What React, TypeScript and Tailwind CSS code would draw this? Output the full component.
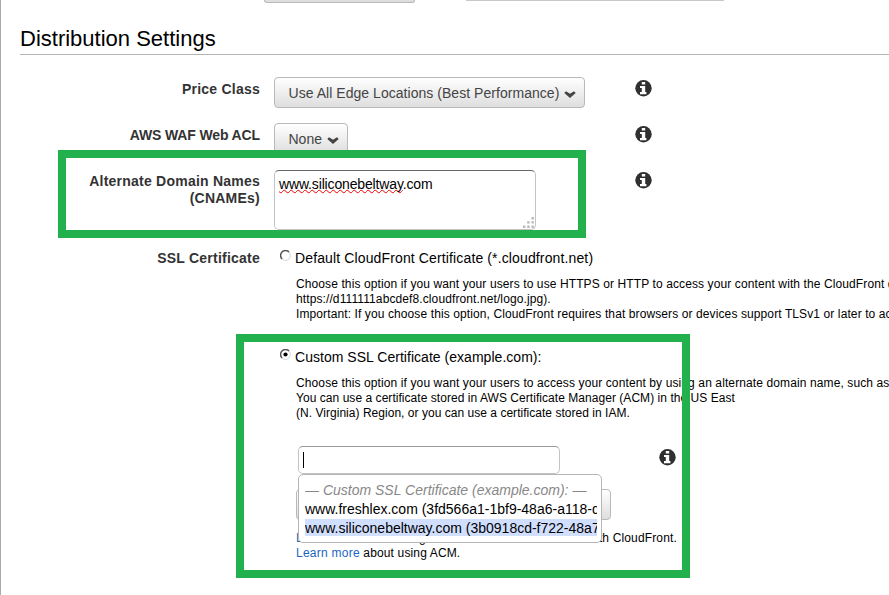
import type { ReactNode } from "react";

function InfoIcon({ className = "" }: { className?: string }) {
  return (
    <svg className={`h-[17px] w-[17px] shrink-0 ${className}`} viewBox="0 0 17 17">
      <circle cx="8.5" cy="8.2" r="8.2" fill="#303030" />
      <path d="M6.8 1.9h3.4v2.6H6.8zM5 6h5.2v6H11.4v2.2H5V12h1.8V8H5z" fill="#fff" />
    </svg>
  );
}

function Chevron() {
  return (
    <svg className="relative top-px h-[7px] w-[12px] shrink-0" viewBox="0 0 12 7">
      <path d="M.3 1.9 2 .2 6 2.7 10 .2 11.7 1.9 6 6.9Z" fill="#444" />
    </svg>
  );
}

function SelectButton({ className, children }: { className: string; children: ReactNode }) {
  return (
    <div
      className={`flex h-[31px] shrink-0 items-center rounded-[4px] border border-[#b9b9b9] bg-linear-to-b from-white to-[#dedede] pt-px pl-[13.5px] text-[14px] text-[#444] ${className}`}
    >
      {children}
    </div>
  );
}

function Row({ label, className, children }: { label: ReactNode; className: string; children: ReactNode }) {
  return (
    <div className={`flex items-start ${className}`}>
      <div className="mr-[13px] w-[240px] shrink-0 pt-[4px] text-right text-[14px] leading-[17px] font-bold tracking-[0.23px] whitespace-nowrap text-[#333]">
        {label}
      </div>
      {children}
    </div>
  );
}

function Radio({ checked = false }: { checked?: boolean }) {
  return (
    <svg className="mr-[3px] h-[12px] w-[12px] shrink-0" viewBox="0 0 12 12">
      <circle cx="5.5" cy="5.5" r="4.9" fill="#fff" stroke="#d4d4d4" />
      <path d="M2 9A4.9 4.9 0 0 1 9 2" fill="none" stroke="#555" strokeWidth="1.5" />
      {checked && <circle cx="5.5" cy="5.5" r="2.1" fill="#000" />}
    </svg>
  );
}

export default function App() {
  return (
    <main className="relative flex h-[595px] w-[889px] flex-col overflow-hidden border-l border-[#aaa] bg-white pl-[19px] font-['Liberation_Sans',Arial,sans-serif] text-black">
      <div className="flex h-[3px] shrink-0 items-end pl-[244px]">
        <div className="h-[3px] w-[151px] rounded-b-[4px] border border-t-0 border-[#b9b9b9] bg-[#dedede]" />
        <div className="mb-[2px] ml-[51px] h-px w-[258px] bg-[#c8c8c8]" />
      </div>
      <h1 className="h-[52px] shrink-0 border-b border-[#b5b5b5] pt-[23px] text-[22px] leading-[25px]">
        <span>Distribution Settings</span>
      </h1>

      <Row label="Price Class" className="mt-[22px] h-[46px]">
        <SelectButton className="ml-px w-[311px]">
          <span className="w-[271px] overflow-hidden whitespace-nowrap tracking-[0.04px]">Use All Edge Locations (Best Performance)</span>
          <span className="ml-[4px] flex"><Chevron /></span>
        </SelectButton>
        <InfoIcon className="mt-[3px] ml-[50px]" />
      </Row>
      <Row label={<span className="tracking-[-0.13px]">AWS WAF Web ACL</span>} className="h-[47px]">
        <SelectButton className="ml-px w-[74px]">
          <span className="mr-[4px] w-[34px]">None</span>
          <Chevron />
        </SelectButton>
        <InfoIcon className="mt-[3px] ml-[287px]" />
      </Row>
      <Row label={<span className="relative -top-px block">Alternate Domain Names<br />(CNAMEs)</span>} className="h-[80px]">
        <div className="ml-px flex h-[60px] w-[262px] shrink-0 items-start justify-between rounded-[5px] border border-[#c4c4c4] border-t-[#666] pl-[4px] text-[14px] tracking-[-0.15px]">
          <span className="mt-[5px] leading-[17px]">
            <span className="underline decoration-[#f00000] decoration-wavy decoration-[1px] underline-offset-[0px] [text-decoration-skip-ink:none]">www.siliconebeltway</span>.com
          </span>
          <svg className="mt-[45px] h-[13px] w-[13px]" viewBox="0 0 13 13" fill="#b8b8b8">
            <path d="M9.5 1h2.4v2.4H9.5zM5.2 5.2h2.4v2.4H5.2zM9.5 5.2h2.4v2.4H9.5zM1 9.5h2.4v2.4H1zM5.2 9.5h2.4v2.4H5.2zM9.5 9.5h2.4v2.4H9.5z" />
          </svg>
        </div>
        <InfoIcon className="mt-[2px] ml-[99px]" />
      </Row>

      <Row label={<span className="relative -top-[4px] block">SSL Certificate</span>} className="">
        <div className="flex w-[640px] shrink-0 flex-col pl-[7px] whitespace-nowrap">
          <div className="flex h-[27px] items-start">
            <Radio />
            <span className="text-[14px] leading-[16px] tracking-[0.13px]">Default CloudFront Certificate (*.cloudfront.net)</span>
          </div>
          <p className="pl-[16px] text-[12px] leading-[15px] tracking-[0.105px]">
            <span>Choose this option if you want your users to use HTTPS or HTTP to access your content with the CloudFront domain name</span><br />
            <span>https://d111111abcdef8.cloudfront.net/logo.jpg).</span><br />
            <span>Important: If you choose this option, CloudFront requires that browsers or devices support TLSv1 or later to access</span>
          </p>
          <div className="mt-[27px] flex h-[27px] items-start">
            <Radio checked />
            <span className="text-[14px] leading-[16px] tracking-[0.03px]">Custom SSL Certificate (example.com):</span>
          </div>
          <p className="pl-[16px] text-[12px] leading-[15px]">
            <span className="tracking-[0.11px]">Choose this option if you want your users to access your content by using an alternate domain name, such as</span><br />
            <span className="tracking-[0.045px]">You can use a certificate stored in AWS Certificate Manager (ACM) in the US East</span><br />
            <span className="tracking-[0.03px]">(N. Virginia) Region, or you can use a certificate stored in IAM.</span>
          </p>
          <div className="relative mt-[25px] ml-[18px] flex h-[43px] items-start">
            <div className="flex h-[28px] w-[262px] items-center rounded-[5px] border border-[#c4c4c4] border-t-[#999] pl-[4px]">
              <span className="h-[16px] w-px bg-black" />
            </div>
            <InfoIcon className="mt-[3px] ml-[99px]" />
            <div className="absolute top-[28px] left-0 z-10 flex h-[69px] w-[304px] flex-col rounded-[5px] border border-[#b5b5b5] bg-white pt-[6px] pr-[4px] pl-[6px] text-[14px] leading-[19px]">
              <div className="overflow-hidden text-[#888] italic">— Custom SSL Certificate (example.com): —</div>
              <div className="overflow-hidden">www.freshlex.com (3fd566a1-1bf9-48a6-a118-d</div>
              <div className="h-[17px] overflow-hidden bg-[#d1dfff] leading-[18px]">www.siliconebeltway.com (3b0918cd-f722-48a7</div>
            </div>
          </div>
          <SelectButton className="ml-[16px] w-[315px]">{null}</SelectButton>
          <p className="mt-[11px] pl-[16px] text-[12px] leading-[15px] tracking-[0.14px]">
            <span><span className="text-[#146eb4]">Learn more</span> about using custom SSL/TLS certificates with CloudFront.</span><br />
            <span className="tracking-[0.25px] text-[#1a66c2]">Learn more</span> <span>about using ACM.</span>
          </p>
        </div>
      </Row>

      <div className="absolute top-[150px] left-[57px] h-[88px] w-[528px] border-8 border-[#22b14c]" />
      <div className="absolute top-[334px] left-[235px] h-[244px] w-[454px] border-8 border-[#22b14c]" />
    </main>
  );
}
